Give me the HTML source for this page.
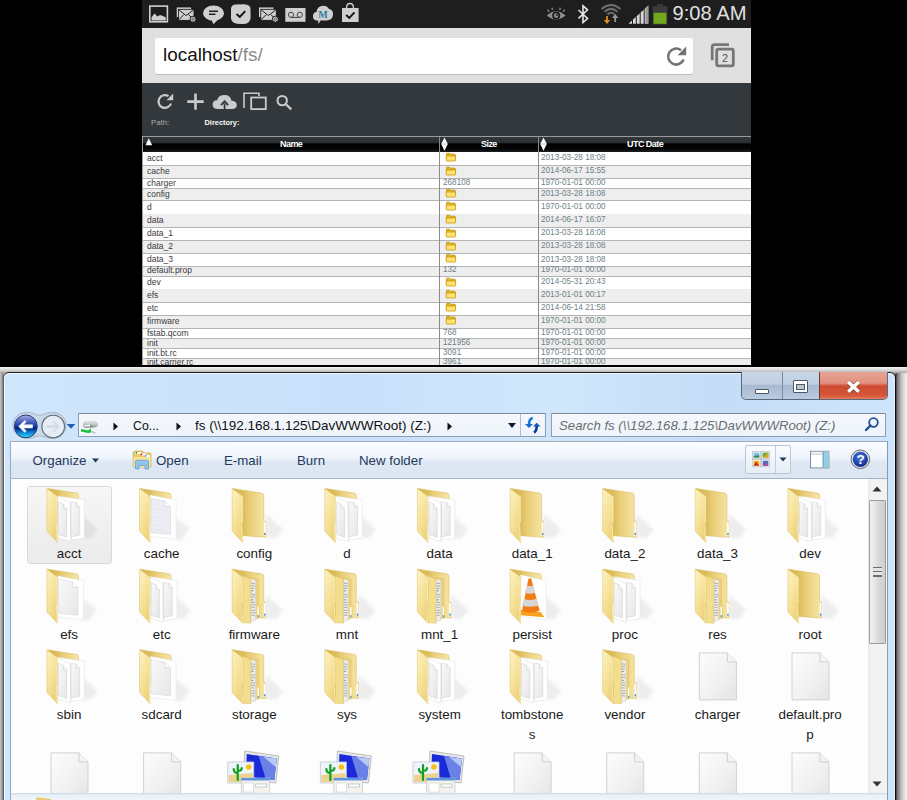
<!DOCTYPE html><html><head><meta charset="utf-8"><style>
*{margin:0;padding:0;box-sizing:border-box}
html,body{width:907px;height:800px;overflow:hidden;background:#000;font-family:"Liberation Sans", sans-serif}
.a{position:absolute}
.t{position:absolute;white-space:nowrap;line-height:1}
</style></head><body>

<div class="a" style="left:142px;top:0;width:609px;height:28px;background:#1e1e1e"></div>
<div class="a" style="left:142px;top:28px;width:609px;height:55px;background:#e0e0e0"></div>
<div class="a" style="left:155px;top:38px;width:538px;height:36px;background:#fff;border-radius:2px;box-shadow:0 1px 1px rgba(0,0,0,.18)"></div>
<div class="t" style="left:163px;top:46.3px;font-size:18.9px;color:#111">localhost<span style="color:#8a8a8a">/fs/</span></div>
<div class="a" style="left:142px;top:83px;width:609px;height:53px;background:#33383c"></div>
<div class="t" style="left:151px;top:119px;font-size:7.8px;color:#aaaaaa">Path:</div>
<div class="t" style="left:204.5px;top:119px;font-size:7.4px;font-weight:bold;color:#f8f8f8">Directory:</div>
<div class="a" style="left:142px;top:136px;width:609px;height:1px;background:#9a9a9a"></div>
<div class="a" style="left:143px;top:137px;width:608px;height:15px;background:linear-gradient(#33383c 0,#2a2e31 40%,#000 45%,#050505 80%,#1c1f22 100%)"></div>
<div class="a" style="left:142px;top:136px;width:1px;height:229px;background:#a0a0a0"></div>
<div class="a" style="left:439px;top:137px;width:1px;height:228px;background:#8a8a8a"></div>
<div class="a" style="left:538px;top:137px;width:1px;height:228px;background:#8a8a8a"></div>
<div class="a" style="left:143px;top:152px;width:608px;height:14px;background:#ffffff"></div>
<div class="a" style="left:143px;top:166px;width:608px;height:13px;background:#eeeeee"></div>
<div class="a" style="left:143px;top:179px;width:608px;height:10px;background:#ffffff"></div>
<div class="a" style="left:143px;top:189px;width:608px;height:12px;background:#eeeeee"></div>
<div class="a" style="left:143px;top:201px;width:608px;height:14px;background:#ffffff"></div>
<div class="a" style="left:143px;top:214px;width:608px;height:14px;background:#eeeeee"></div>
<div class="a" style="left:143px;top:228px;width:608px;height:13px;background:#ffffff"></div>
<div class="a" style="left:143px;top:241px;width:608px;height:13px;background:#eeeeee"></div>
<div class="a" style="left:143px;top:253px;width:608px;height:14px;background:#ffffff"></div>
<div class="a" style="left:143px;top:267px;width:608px;height:10px;background:#eeeeee"></div>
<div class="a" style="left:143px;top:277px;width:608px;height:13px;background:#ffffff"></div>
<div class="a" style="left:143px;top:289px;width:608px;height:14px;background:#eeeeee"></div>
<div class="a" style="left:143px;top:302px;width:608px;height:14px;background:#ffffff"></div>
<div class="a" style="left:143px;top:315px;width:608px;height:14px;background:#eeeeee"></div>
<div class="a" style="left:143px;top:328px;width:608px;height:11px;background:#ffffff"></div>
<div class="a" style="left:143px;top:339px;width:608px;height:10px;background:#eeeeee"></div>
<div class="a" style="left:143px;top:349px;width:608px;height:10px;background:#ffffff"></div>
<div class="a" style="left:143px;top:359px;width:608px;height:12px;background:#eeeeee"></div>
<div class="a" style="left:143px;top:165px;width:608px;height:1px;background:#b4b4b4"></div>
<div class="a" style="left:143px;top:178px;width:608px;height:1px;background:#b4b4b4"></div>
<div class="a" style="left:143px;top:188px;width:608px;height:1px;background:#b4b4b4"></div>
<div class="a" style="left:143px;top:200px;width:608px;height:1px;background:#b4b4b4"></div>
<div class="a" style="left:143px;top:227px;width:608px;height:1px;background:#b4b4b4"></div>
<div class="a" style="left:143px;top:240px;width:608px;height:1px;background:#b4b4b4"></div>
<div class="a" style="left:143px;top:253px;width:608px;height:1px;background:#b4b4b4"></div>
<div class="a" style="left:143px;top:266px;width:608px;height:1px;background:#b4b4b4"></div>
<div class="a" style="left:143px;top:276px;width:608px;height:1px;background:#b4b4b4"></div>
<div class="a" style="left:143px;top:302px;width:608px;height:1px;background:#b4b4b4"></div>
<div class="a" style="left:143px;top:315px;width:608px;height:1px;background:#b4b4b4"></div>
<div class="a" style="left:143px;top:328px;width:608px;height:1px;background:#b4b4b4"></div>
<div class="a" style="left:143px;top:338px;width:608px;height:1px;background:#b4b4b4"></div>
<div class="a" style="left:143px;top:348px;width:608px;height:1px;background:#b4b4b4"></div>
<div class="a" style="left:143px;top:358px;width:608px;height:1px;background:#b4b4b4"></div>
<div class="a" style="left:143px;top:370px;width:608px;height:1px;background:#b4b4b4"></div>
<div class="t" style="left:147px;top:153.70px;font-size:8.5px;color:#3a3a3a">acct</div>
<svg class="a" style="left:445px;top:152.2px" width="12" height="10" viewBox="0 0 12 10"><path d="M1.5 7.5 L1.5 2 Q1.5 1.2 2.3 1.2 L4.6 1.2 L5.6 2.2 L9.6 2.2 Q10.3 2.2 10.3 3 L10.3 7.5 Z" fill="#e8b820" stroke="#b88a10" stroke-width=".8"/><path d="M1.2 4 L10.6 4 L10.6 8.3 Q10.6 9 9.9 9 L1.9 9 Q1.2 9 1.2 8.3 Z" fill="#ffe270" stroke="#c49a10" stroke-width=".8"/></svg>
<div class="t" style="left:541px;top:153.90px;font-size:8.2px;color:#6f7f88">2013-03-28 18:08</div>
<div class="t" style="left:147px;top:167.20px;font-size:8.5px;color:#3a3a3a">cache</div>
<svg class="a" style="left:445px;top:165.7px" width="12" height="10" viewBox="0 0 12 10"><path d="M1.5 7.5 L1.5 2 Q1.5 1.2 2.3 1.2 L4.6 1.2 L5.6 2.2 L9.6 2.2 Q10.3 2.2 10.3 3 L10.3 7.5 Z" fill="#e8b820" stroke="#b88a10" stroke-width=".8"/><path d="M1.2 4 L10.6 4 L10.6 8.3 Q10.6 9 9.9 9 L1.9 9 Q1.2 9 1.2 8.3 Z" fill="#ffe270" stroke="#c49a10" stroke-width=".8"/></svg>
<div class="t" style="left:541px;top:167.40px;font-size:8.2px;color:#6f7f88">2014-06-17 15:55</div>
<div class="t" style="left:147px;top:178.50px;font-size:8.5px;color:#3a3a3a">charger</div>
<div class="t" style="left:443px;top:178.70px;font-size:8.2px;color:#6f7f88">268108</div>
<div class="t" style="left:541px;top:178.70px;font-size:8.2px;color:#6f7f88">1970-01-01 00:00</div>
<div class="t" style="left:147px;top:189.80px;font-size:8.5px;color:#3a3a3a">config</div>
<svg class="a" style="left:445px;top:188.2px" width="12" height="10" viewBox="0 0 12 10"><path d="M1.5 7.5 L1.5 2 Q1.5 1.2 2.3 1.2 L4.6 1.2 L5.6 2.2 L9.6 2.2 Q10.3 2.2 10.3 3 L10.3 7.5 Z" fill="#e8b820" stroke="#b88a10" stroke-width=".8"/><path d="M1.2 4 L10.6 4 L10.6 8.3 Q10.6 9 9.9 9 L1.9 9 Q1.2 9 1.2 8.3 Z" fill="#ffe270" stroke="#c49a10" stroke-width=".8"/></svg>
<div class="t" style="left:541px;top:190.00px;font-size:8.2px;color:#6f7f88">2013-03-28 18:08</div>
<div class="t" style="left:147px;top:202.80px;font-size:8.5px;color:#3a3a3a">d</div>
<svg class="a" style="left:445px;top:201.2px" width="12" height="10" viewBox="0 0 12 10"><path d="M1.5 7.5 L1.5 2 Q1.5 1.2 2.3 1.2 L4.6 1.2 L5.6 2.2 L9.6 2.2 Q10.3 2.2 10.3 3 L10.3 7.5 Z" fill="#e8b820" stroke="#b88a10" stroke-width=".8"/><path d="M1.2 4 L10.6 4 L10.6 8.3 Q10.6 9 9.9 9 L1.9 9 Q1.2 9 1.2 8.3 Z" fill="#ffe270" stroke="#c49a10" stroke-width=".8"/></svg>
<div class="t" style="left:541px;top:203.00px;font-size:8.2px;color:#6f7f88">1970-01-01 00:00</div>
<div class="t" style="left:147px;top:215.90px;font-size:8.5px;color:#3a3a3a">data</div>
<svg class="a" style="left:445px;top:214.2px" width="12" height="10" viewBox="0 0 12 10"><path d="M1.5 7.5 L1.5 2 Q1.5 1.2 2.3 1.2 L4.6 1.2 L5.6 2.2 L9.6 2.2 Q10.3 2.2 10.3 3 L10.3 7.5 Z" fill="#e8b820" stroke="#b88a10" stroke-width=".8"/><path d="M1.2 4 L10.6 4 L10.6 8.3 Q10.6 9 9.9 9 L1.9 9 Q1.2 9 1.2 8.3 Z" fill="#ffe270" stroke="#c49a10" stroke-width=".8"/></svg>
<div class="t" style="left:541px;top:216.10px;font-size:8.2px;color:#6f7f88">2014-06-17 16:07</div>
<div class="t" style="left:147px;top:229.00px;font-size:8.5px;color:#3a3a3a">data_1</div>
<svg class="a" style="left:445px;top:227.7px" width="12" height="10" viewBox="0 0 12 10"><path d="M1.5 7.5 L1.5 2 Q1.5 1.2 2.3 1.2 L4.6 1.2 L5.6 2.2 L9.6 2.2 Q10.3 2.2 10.3 3 L10.3 7.5 Z" fill="#e8b820" stroke="#b88a10" stroke-width=".8"/><path d="M1.2 4 L10.6 4 L10.6 8.3 Q10.6 9 9.9 9 L1.9 9 Q1.2 9 1.2 8.3 Z" fill="#ffe270" stroke="#c49a10" stroke-width=".8"/></svg>
<div class="t" style="left:541px;top:229.20px;font-size:8.2px;color:#6f7f88">2013-03-28 18:08</div>
<div class="t" style="left:147px;top:241.80px;font-size:8.5px;color:#3a3a3a">data_2</div>
<svg class="a" style="left:445px;top:240.7px" width="12" height="10" viewBox="0 0 12 10"><path d="M1.5 7.5 L1.5 2 Q1.5 1.2 2.3 1.2 L4.6 1.2 L5.6 2.2 L9.6 2.2 Q10.3 2.2 10.3 3 L10.3 7.5 Z" fill="#e8b820" stroke="#b88a10" stroke-width=".8"/><path d="M1.2 4 L10.6 4 L10.6 8.3 Q10.6 9 9.9 9 L1.9 9 Q1.2 9 1.2 8.3 Z" fill="#ffe270" stroke="#c49a10" stroke-width=".8"/></svg>
<div class="t" style="left:541px;top:242.00px;font-size:8.2px;color:#6f7f88">2013-03-28 18:08</div>
<div class="t" style="left:147px;top:255.30px;font-size:8.5px;color:#3a3a3a">data_3</div>
<svg class="a" style="left:445px;top:253.2px" width="12" height="10" viewBox="0 0 12 10"><path d="M1.5 7.5 L1.5 2 Q1.5 1.2 2.3 1.2 L4.6 1.2 L5.6 2.2 L9.6 2.2 Q10.3 2.2 10.3 3 L10.3 7.5 Z" fill="#e8b820" stroke="#b88a10" stroke-width=".8"/><path d="M1.2 4 L10.6 4 L10.6 8.3 Q10.6 9 9.9 9 L1.9 9 Q1.2 9 1.2 8.3 Z" fill="#ffe270" stroke="#c49a10" stroke-width=".8"/></svg>
<div class="t" style="left:541px;top:255.50px;font-size:8.2px;color:#6f7f88">2013-03-28 18:08</div>
<div class="t" style="left:147px;top:266.20px;font-size:8.5px;color:#3a3a3a">default.prop</div>
<div class="t" style="left:443px;top:266.40px;font-size:8.2px;color:#6f7f88">132</div>
<div class="t" style="left:541px;top:266.40px;font-size:8.2px;color:#6f7f88">1970-01-01 00:00</div>
<div class="t" style="left:147px;top:278.00px;font-size:8.5px;color:#3a3a3a">dev</div>
<svg class="a" style="left:445px;top:276.7px" width="12" height="10" viewBox="0 0 12 10"><path d="M1.5 7.5 L1.5 2 Q1.5 1.2 2.3 1.2 L4.6 1.2 L5.6 2.2 L9.6 2.2 Q10.3 2.2 10.3 3 L10.3 7.5 Z" fill="#e8b820" stroke="#b88a10" stroke-width=".8"/><path d="M1.2 4 L10.6 4 L10.6 8.3 Q10.6 9 9.9 9 L1.9 9 Q1.2 9 1.2 8.3 Z" fill="#ffe270" stroke="#c49a10" stroke-width=".8"/></svg>
<div class="t" style="left:541px;top:278.20px;font-size:8.2px;color:#6f7f88">2014-05-31 20:43</div>
<div class="t" style="left:147px;top:290.90px;font-size:8.5px;color:#3a3a3a">efs</div>
<svg class="a" style="left:445px;top:289.2px" width="12" height="10" viewBox="0 0 12 10"><path d="M1.5 7.5 L1.5 2 Q1.5 1.2 2.3 1.2 L4.6 1.2 L5.6 2.2 L9.6 2.2 Q10.3 2.2 10.3 3 L10.3 7.5 Z" fill="#e8b820" stroke="#b88a10" stroke-width=".8"/><path d="M1.2 4 L10.6 4 L10.6 8.3 Q10.6 9 9.9 9 L1.9 9 Q1.2 9 1.2 8.3 Z" fill="#ffe270" stroke="#c49a10" stroke-width=".8"/></svg>
<div class="t" style="left:541px;top:291.10px;font-size:8.2px;color:#6f7f88">2013-01-01 00:17</div>
<div class="t" style="left:147px;top:303.70px;font-size:8.5px;color:#3a3a3a">etc</div>
<svg class="a" style="left:445px;top:302.2px" width="12" height="10" viewBox="0 0 12 10"><path d="M1.5 7.5 L1.5 2 Q1.5 1.2 2.3 1.2 L4.6 1.2 L5.6 2.2 L9.6 2.2 Q10.3 2.2 10.3 3 L10.3 7.5 Z" fill="#e8b820" stroke="#b88a10" stroke-width=".8"/><path d="M1.2 4 L10.6 4 L10.6 8.3 Q10.6 9 9.9 9 L1.9 9 Q1.2 9 1.2 8.3 Z" fill="#ffe270" stroke="#c49a10" stroke-width=".8"/></svg>
<div class="t" style="left:541px;top:303.90px;font-size:8.2px;color:#6f7f88">2014-06-14 21:58</div>
<div class="t" style="left:147px;top:316.70px;font-size:8.5px;color:#3a3a3a">firmware</div>
<svg class="a" style="left:445px;top:315.2px" width="12" height="10" viewBox="0 0 12 10"><path d="M1.5 7.5 L1.5 2 Q1.5 1.2 2.3 1.2 L4.6 1.2 L5.6 2.2 L9.6 2.2 Q10.3 2.2 10.3 3 L10.3 7.5 Z" fill="#e8b820" stroke="#b88a10" stroke-width=".8"/><path d="M1.2 4 L10.6 4 L10.6 8.3 Q10.6 9 9.9 9 L1.9 9 Q1.2 9 1.2 8.3 Z" fill="#ffe270" stroke="#c49a10" stroke-width=".8"/></svg>
<div class="t" style="left:541px;top:316.90px;font-size:8.2px;color:#6f7f88">1970-01-01 00:00</div>
<div class="t" style="left:147px;top:329.25px;font-size:8.5px;color:#3a3a3a">fstab.qcom</div>
<div class="t" style="left:443px;top:329.45px;font-size:8.2px;color:#6f7f88">768</div>
<div class="t" style="left:541px;top:329.45px;font-size:8.2px;color:#6f7f88">1970-01-01 00:00</div>
<div class="t" style="left:147px;top:339.20px;font-size:8.5px;color:#3a3a3a">init</div>
<div class="t" style="left:443px;top:339.40px;font-size:8.2px;color:#6f7f88">121956</div>
<div class="t" style="left:541px;top:339.40px;font-size:8.2px;color:#6f7f88">1970-01-01 00:00</div>
<div class="t" style="left:147px;top:349.10px;font-size:8.5px;color:#3a3a3a">init.bt.rc</div>
<div class="t" style="left:443px;top:349.30px;font-size:8.2px;color:#6f7f88">3091</div>
<div class="t" style="left:541px;top:349.30px;font-size:8.2px;color:#6f7f88">1970-01-01 00:00</div>
<div class="t" style="left:147px;top:358.20px;font-size:8.5px;color:#3a3a3a">init.carrier.rc</div>
<div class="t" style="left:443px;top:358.40px;font-size:8.2px;color:#6f7f88">3961</div>
<div class="t" style="left:541px;top:358.40px;font-size:8.2px;color:#6f7f88">1970-01-01 00:00</div>
<div class="a" style="left:439px;top:152px;width:1px;height:213px;background:#8a8a8a"></div>
<div class="a" style="left:538px;top:152px;width:1px;height:213px;background:#8a8a8a"></div>
<div class="a" style="left:0;top:365px;width:907px;height:2px;background:#000"></div>
<div class="t" style="left:280px;top:140px;font-size:9px;font-weight:bold;color:#fff;letter-spacing:-0.55px">Name</div>
<div class="t" style="left:481px;top:140px;font-size:9px;font-weight:bold;color:#fff;letter-spacing:-0.55px">Size</div>
<div class="t" style="left:627px;top:140px;font-size:9px;font-weight:bold;color:#fff;letter-spacing:-0.55px">UTC Date</div>
<svg class="a" style="left:142px;top:0" width="609" height="28" viewBox="142 0 609 28">
<rect x="149.8" y="6.1" width="17.6" height="15.7" fill="none" stroke="#cfcfcf" stroke-width="1.6"/>
<path d="M151.5 20.5 L151.5 17.2 L154.5 13.6 L157.5 16.5 L160 15 L163 16 L165.8 17.5 L165.8 20.5 Z" fill="#cfcfcf"/>
<rect x="176.2" y="7" width="15.5" height="10.5" fill="#cfcfcf" stroke="#111" stroke-width=".8"/>
<rect x="178.5" y="9.3" width="15.5" height="11" fill="#cfcfcf" stroke="#111" stroke-width=".8"/>
<path d="M179 10 L186 15.5 L193.5 10 M179 19.5 L184 14.5 M193.5 19.5 L188.5 14.5" stroke="#222" stroke-width="1" fill="none"/>
<circle cx="193" cy="19.2" r="3" fill="#cfcfcf" stroke="#111" stroke-width=".9"/><circle cx="193" cy="19.2" r="1.2" fill="none" stroke="#333" stroke-width=".7"/>
<ellipse cx="213.5" cy="13.2" rx="10.5" ry="7.6" fill="#cfcfcf"/>
<path d="M211 19 L213.5 24.3 L218 19.5 Z" fill="#cfcfcf"/>
<path d="M209 11.2 L218 11.2 M209 14.2 L215.5 14.2" stroke="#222" stroke-width="1.5"/>
<path d="M236 4.5 Q231 4.5 231 9 L231 16 Q230.5 20 233.5 22.5 Q237 24.5 244 24 Q250 23.5 250.6 18 L250.5 10 Q251 4.5 244 4.3 Z" fill="#cfcfcf"/>
<path d="M236.5 14 L239.8 17 L245.2 11.2" stroke="#111" stroke-width="1.9" fill="none"/>
<rect x="258.5" y="7" width="15.5" height="10.5" fill="#cfcfcf" stroke="#111" stroke-width=".8"/>
<rect x="260.8" y="9.3" width="15.5" height="11" fill="#cfcfcf" stroke="#111" stroke-width=".8"/>
<path d="M261.3 10 L268.3 15.5 L275.8 10 M261.3 19.5 L266.3 14.5 M275.8 19.5 L270.8 14.5" stroke="#222" stroke-width="1" fill="none"/>
<circle cx="275.3" cy="19.2" r="3" fill="#cfcfcf" stroke="#111" stroke-width=".9"/><circle cx="275.3" cy="19.2" r="1.2" fill="none" stroke="#333" stroke-width=".7"/>
<rect x="285.3" y="8" width="20.2" height="13.8" fill="#cfcfcf"/>
<circle cx="291" cy="14.8" r="2.6" fill="none" stroke="#444" stroke-width="1"/><circle cx="299.8" cy="14.8" r="2.6" fill="none" stroke="#444" stroke-width="1"/><path d="M291 17.4 L299.8 17.4" stroke="#444" stroke-width="1"/>
<path d="M316 20.5 Q312.5 19.5 313 15.5 Q313.5 12 316.5 12 Q317 7 321.5 6 Q326.5 5 329 9 Q333 9.5 333 14 Q333.5 19.5 327 20.5 L320.5 20.5 L318.5 24 L318 20.5 Z" fill="#cfcfcf"/>
<text x="323" y="18.2" font-family="Liberation Serif" font-weight="bold" font-size="10" fill="#2a7fa0" text-anchor="middle">M</text>
<path d="M346.5 8 Q346.5 3.5 350 3.5 Q353.5 3.5 353.5 8" fill="none" stroke="#cfcfcf" stroke-width="1.3"/>
<rect x="342" y="8" width="16.6" height="14" fill="#cfcfcf"/>
<path d="M346.2 15 L349.3 18 L354.5 12.3" stroke="#111" stroke-width="1.9" fill="none"/>
<path d="M546.8 15.6 Q556 6.8 565.6 15.6 Q556 23.6 546.8 15.6 Z" fill="#8e8e8e"/>
<circle cx="556.2" cy="15.6" r="4" fill="#1e1e1e"/><circle cx="556.2" cy="15.6" r="2.3" fill="#8e8e8e"/><circle cx="557" cy="15" r="1" fill="#1e1e1e"/>
<path d="M549.2 11.6 L547.4 9.6 M552.6 9.8 L551.8 7.8 M559.6 9.8 L560.4 7.8 M563 11.6 L564.8 9.6" stroke="#8e8e8e" stroke-width="1.4"/>
<path d="M578.5 10 L587.5 18.5 L583 22.5 L583 5.8 L587.5 9.8 L578.5 18.3" fill="none" stroke="#e6e6e6" stroke-width="1.6"/>
<path d="M601.5 9 Q611 1 620.5 9" fill="none" stroke="#6e6e6e" stroke-width="2"/>
<path d="M604.5 11.8 Q611 6 617.5 11.8" fill="none" stroke="#6e6e6e" stroke-width="2"/>
<path d="M607.5 14.5 Q611 11 614.5 14.5" fill="none" stroke="#6e6e6e" stroke-width="2"/>
<path d="M607 16 L607 21" stroke="#e08a20" stroke-width="1.8"/><path d="M603.8 20 L610.2 20 L607 24 Z" fill="#e08a20"/>
<path d="M615.2 17.5 L615.2 22" stroke="#9a9a9a" stroke-width="1.8"/><path d="M612 18 L618.4 18 L615.2 14 Z" fill="#9a9a9a"/>
<path d="M628.5 23.8 L648.3 5.5 L648.3 23.8 Z" fill="#d8d8d8"/>
<path d="M632.5 20 L632.5 24 M636.3 16.5 L636.3 24 M640.2 13 L640.2 24 M644.2 9 L644.2 24" stroke="#1e1e1e" stroke-width="1"/>
<path d="M645.5 8 L648.3 5.5 L648.3 23.8 L645.5 23.8 Z" fill="#9a9a9a"/>
<rect x="657" y="4.3" width="6.2" height="2" fill="#3c3c3c"/>
<rect x="652.7" y="6.2" width="14.6" height="18.4" fill="#3c3c3c"/>
<rect x="653.6" y="12.8" width="12.8" height="11" fill="#72a81e"/>
</svg>
<div class="t" style="left:672.5px;top:3.2px;font-size:20.2px;color:#e0e0e0">9:08 AM</div>
<svg class="a" style="left:660px;top:40px" width="90" height="32" viewBox="660 40 90 32">
<path d="M683.6 59.5 A8 8 0 1 1 681 50.2" fill="none" stroke="#737373" stroke-width="2.6"/>
<path d="M686.2 46.5 L686.2 55.2 L677.6 55.2 Z" fill="#737373"/>
<path d="M712.2 60.3 L712.2 47 Q712.2 44.6 714.6 44.6 L729 44.6" fill="none" stroke="#767676" stroke-width="2.8"/>
<rect x="716.7" y="49.2" width="16.6" height="16.6" rx="1.6" fill="none" stroke="#767676" stroke-width="2.8"/>
<text x="725" y="62" font-family="Liberation Sans" font-size="11" fill="#555" text-anchor="middle">2</text>
</svg>
<svg class="a" style="left:150px;top:88px" width="150" height="26" viewBox="150 88 150 26">
<path d="M171 103.5 A6.4 6.4 0 1 1 168.5 96.2" fill="none" stroke="#c9cbcc" stroke-width="2.2"/>
<path d="M173.2 93.4 L173.2 100.2 L166.6 100.2 Z" fill="#c9cbcc"/>
<path d="M195.5 93.5 L195.5 109.8 M187.3 101.6 L203.7 101.6" stroke="#c9cbcc" stroke-width="2.6"/>
<path d="M218 109 Q212.6 109 212.6 104.5 Q212.6 100.5 217 100.3 Q218.5 95 224.5 95 Q230.5 95 231.5 100.8 Q236.8 101 236.8 105 Q236.8 109 232 109 Z" fill="#c9cbcc"/>
<path d="M224.6 109 L224.6 103.5 M221 105.2 L224.6 101.4 L228.2 105.2" stroke="#33383c" stroke-width="1.8" fill="none"/>
<path d="M245 107 L244 107 L244 93.2 L259 93.2 L259 96" fill="none" stroke="#c9cbcc" stroke-width="1.6"/>
<rect x="251.2" y="97.5" width="14.6" height="11.6" fill="none" stroke="#c9cbcc" stroke-width="1.8"/>
<circle cx="282.2" cy="100.6" r="4.7" fill="none" stroke="#c9cbcc" stroke-width="2"/>
<path d="M285.6 104 L291.3 109.4" stroke="#c9cbcc" stroke-width="2.4"/>
</svg>
<svg class="a" style="left:143px;top:137px" width="608" height="15" viewBox="143 137 608 15">
<path d="M145.5 145.2 L148.8 138.2 L152.2 145.2 Z" fill="#fff"/>
<path d="M441.2 144 L444.5 137.6 L447.8 144 L444.5 150.8 Z" fill="#fff"/><path d="M441.5 144 L447.5 144" stroke="#999" stroke-width=".6"/>
<path d="M540.2 144 L543.5 137.6 L546.8 144 L543.5 150.8 Z" fill="#fff"/><path d="M540.5 144 L546.5 144" stroke="#999" stroke-width=".6"/>
</svg>
<div class="a" style="left:0;top:367px;width:907px;height:433px;background:linear-gradient(90deg,#cacaca 0,#8c8c8c 2.5px,#6a6a6a 3px,#c8c8c8 4px,#c8c8c8 894px,#3a3a3a 896px,#7a7a7a 897.5px,#cacaca 902px,#f4f4f4 907px)"></div>
<div class="a" style="left:0;top:367px;width:907px;height:6px;background:linear-gradient(#f4f4f4,#d4d4d4 55%,#a6a6a6)"></div>
<div class="a" style="left:3px;top:372px;width:893px;height:440px;border:1px solid #26303a;border-top-color:#1c1c1c;border-left-color:#5a5e62;border-right-color:#0c0c0c;border-radius:6px 6px 0 0;background:linear-gradient(90deg,#d0e6fc 0,#cde3fa 15%,#c8e1fb 40%,#d0e6fb 62%,#c4ddf7 80%,#cfe5fc 100%);box-shadow:inset 1px 1px 0 #f2f8ff,inset -1px 0 0 #e8f2fc"></div>
<div class="a" style="left:741px;top:372px;width:147px;height:28px;border:1px solid #5a6878;border-top:none;border-radius:0 0 5px 5px;overflow:hidden;background:linear-gradient(#c9d7e7 0,#bfcfe2 45%,#a8bad0 50%,#b8cbe0 100%)"><div class="a" style="left:40px;top:0;width:1px;height:28px;background:#7a8898"></div><div class="a" style="left:78px;top:0;width:68px;height:28px;background:linear-gradient(#e8a394 0,#e2907e 40%,#cf4a2e 50%,#d5573a 85%,#e98a70 100%)"></div><div class="a" style="left:77px;top:0;width:1px;height:28px;background:#6b3a30"></div></div>
<div class="a" style="left:755px;top:389px;width:14px;height:5px;background:#fff;border:1px solid #4a5868;border-radius:1px"></div>
<div class="a" style="left:793px;top:380px;width:15px;height:13px;border:1px solid #4a5868;background:#fff;border-radius:1px"><div style="position:absolute;left:2px;top:3px;width:9px;height:6px;background:#b9c6d4;border:1px solid #4a5868"></div></div>
<svg class="a" style="left:840px;top:377px" width="26" height="18" viewBox="0 0 26 18"><path d="M8.2 5 L18.8 14.8 M18.8 5 L8.2 14.8" stroke="#4a3a38" stroke-width="5" stroke-linecap="butt" opacity=".55"/><path d="M8.2 5 L18.8 14.8 M18.8 5 L8.2 14.8" stroke="#fdfdfd" stroke-width="3.5" stroke-linecap="butt"/></svg>
<svg class="a" style="left:10px;top:409px" width="62" height="32" viewBox="10 409 62 32"><path d="M25.9 412.4 Q33 412.4 36 414.6 Q39.5 416.2 43 414.6 Q46.5 412.4 53.2 412.4 A13 13 0 0 1 53.2 438.4 Q46.5 438.4 43 436.6 Q39.5 435 36 436.6 Q33 438.4 25.9 438.4 A13 13 0 0 1 25.9 412.4 Z" fill="#c9d8e8" stroke="#a3b0bf" stroke-width="1" opacity=".9"/></svg>
<svg class="a" style="left:13px;top:413.8px" width="26" height="26" viewBox="0 0 26 26"><defs><linearGradient id="bk" x1="0" y1="0" x2="0" y2="1"><stop offset="0" stop-color="#a8b4e0"/><stop offset=".3" stop-color="#4a62c0"/><stop offset=".5" stop-color="#1a3aa8"/><stop offset=".56" stop-color="#001a78"/><stop offset=".75" stop-color="#0a78d0"/><stop offset="1" stop-color="#38e0fc"/></linearGradient></defs><circle cx="12.85" cy="12.4" r="11.4" fill="url(#bk)" stroke="#2a3a78" stroke-width="1"/><path d="M5.6 12.4 L11.8 6.4 L13.2 7.8 L10.6 10.8 L19.6 10.8 L19.6 14 L10.6 14 L13.2 17 L11.8 18.4 Z" fill="#fff" stroke="#e8e8e8" stroke-width=".6" stroke-linejoin="round"/></svg>
<svg class="a" style="left:40px;top:413.8px" width="26" height="26" viewBox="0 0 26 26"><circle cx="13.2" cy="12.5" r="11.3" fill="#e6edf5" stroke="#5f6a76" stroke-width="1.1"/><path d="M20.2 12.5 L14.2 6.6 L12.8 8 L15.4 11 L6.5 11 L6.5 14 L15.4 14 L12.8 17 L14.2 18.4 Z" fill="#d4dee9"/></svg>
<svg class="a" style="left:66px;top:422px" width="10" height="8" viewBox="0 0 10 8"><path d="M0.7 2 L9.3 2 L5 6.8 Z" fill="#1f5bb8"/></svg>
<div class="a" style="left:78px;top:413px;width:468px;height:24px;background:linear-gradient(#f4f8fd,#eef4fb);border:1px solid #8e9db0;border-top-color:#7d8898;border-radius:1px"></div>
<div class="a" style="left:520px;top:414px;width:1px;height:22px;background:#b0bccb"></div>
<svg class="a" style="left:76px;top:414px" width="28" height="24" viewBox="76 414 28 24"><defs><linearGradient id="drv" x1="0" y1="0" x2="0" y2="1"><stop offset="0" stop-color="#e6e6e6"/><stop offset=".5" stop-color="#c8c8c8"/><stop offset="1" stop-color="#8a8a8a"/></linearGradient></defs><path d="M83 424 Q83 421.5 86 421 L91.5 420.4 Q97.8 421 97.8 423.5 L97.8 425.6 Q97 427.6 92 427.8 L86 428 Q83 427.6 83 426 Z" fill="url(#drv)"/><path d="M84.5 425.2 L90 424.8 L90 426.2 L84.5 426.6 Z" fill="#f4f4fc"/><rect x="90.2" y="425" width="1.6" height="2" fill="#3ab83a"/><path d="M81 429 L88 430.6 L91 428.6 L91 432.4 L88 433 L81 431.5 Z" fill="#12c832"/><path d="M91 431.5 L95.5 433.2" stroke="#b8c0c8" stroke-width="1.4"/></svg>
<svg class="a" style="left:113px;top:422px" width="6" height="9" viewBox="0 0 6 9"><path d="M0.5 0.5 L5 4.5 L0.5 8.5 Z" fill="#111"/></svg>
<svg class="a" style="left:176px;top:422px" width="6" height="9" viewBox="0 0 6 9"><path d="M0.5 0.5 L5 4.5 L0.5 8.5 Z" fill="#111"/></svg>
<svg class="a" style="left:447px;top:422px" width="6" height="9" viewBox="0 0 6 9"><path d="M0.5 0.5 L5 4.5 L0.5 8.5 Z" fill="#111"/></svg>
<div class="t" style="left:133px;top:419.5px;font-size:12.3px;color:#111">Co...</div>
<div class="t" style="left:195px;top:419px;font-size:13.5px;color:#111">fs (\\192.168.1.125\DavWWWRoot) (Z:)</div>
<svg class="a" style="left:507px;top:422px" width="10" height="7" viewBox="0 0 10 7"><path d="M1 1 L9 1 L5 6 Z" fill="#10163a"/></svg>
<svg class="a" style="left:523px;top:416px" width="20" height="18" viewBox="0 0 20 18"><path d="M9.8 2 Q6.2 2.6 6 8.2" fill="none" stroke="#1a78d0" stroke-width="2.6"/><path d="M2 8 L10 8 L6 12 Z" fill="#1a6cc8"/><path d="M10 10.5 L17.5 10.5 L13.7 6.8 Z" fill="#1a5cbc"/><path d="M13.7 10 Q13.7 15 11 16.5" fill="none" stroke="#0c3a9a" stroke-width="2.6"/></svg>
<div class="a" style="left:551px;top:413px;width:335px;height:24px;background:linear-gradient(#f4f8fd,#eef4fb);border:1px solid #8e9db0;border-top-color:#7d8898;border-radius:1px"></div>
<div class="t" style="left:559px;top:419px;font-size:13.2px;font-style:italic;color:#6d6d6d">Search fs (\\192.168.1.125\DavWWWRoot) (Z:)</div>
<svg class="a" style="left:864px;top:416px" width="16" height="16" viewBox="0 0 16 16"><circle cx="9.5" cy="6.5" r="4.3" fill="none" stroke="#1f4e9a" stroke-width="1.8"/><path d="M6.5 9.5 L2 14" stroke="#1f4e9a" stroke-width="2.4" stroke-linecap="round"/></svg>
<div class="a" style="left:11px;top:441px;width:876px;height:38px;background:linear-gradient(#fafcff 0,#f0f6fd 40%,#e6eef9 50%,#dee8f5 56%,#dce6f3 100%);border-top:1px solid #9eabbb;border-bottom:1px solid #a4b6cf"></div>
<div class="t" style="left:32.5px;top:454px;color:#1e395b;font-size:13.3px">Organize</div>
<svg class="a" style="left:92px;top:458px" width="7" height="5" viewBox="0 0 7 5"><path d="M0 0.5 L7 0.5 L3.5 4.5 Z" fill="#1e395b"/></svg>
<svg class="a" style="left:128px;top:446px" width="28" height="28" viewBox="128 446 28 28"><path d="M133.2 452.5 L134.5 451 L142.5 451 L143.5 452.5 L145 453 L150.5 453 L151 454 L151 467 L133.2 467 Z" fill="#e8c868" stroke="#c8a040" stroke-width=".6"/><rect x="135" y="452" width="6" height="2.2" fill="#fff"/><circle cx="136.4" cy="452.9" r=".9" fill="#10a010"/><rect x="141" y="453.4" width="5" height="2.2" fill="#fff"/><circle cx="141.4" cy="454.4" r=".9" fill="#e01010"/><rect x="145" y="455" width="5" height="2" fill="#fff"/><circle cx="145.6" cy="455.8" r=".9" fill="#2a90f0"/><path d="M133.6 457 L150.6 457 L150.6 467 L133.6 467 Z" fill="#f8e49a"/><path d="M135.5 469 L135.5 461.5 Q135.5 460.2 137 460.2 L147 460.2 Q148.5 460.2 148.5 461.5 L148.5 469 L145 469 L145 465.5 L139 465.5 L139 469 Z" fill="#90c4ec" stroke="#5a9ad0" stroke-width=".7"/></svg>
<div class="t" style="left:156px;top:454px;color:#1e395b;font-size:13.3px">Open</div>
<div class="t" style="left:224px;top:454px;color:#1e395b;font-size:13.3px">E-mail</div>
<div class="t" style="left:297px;top:454px;color:#1e395b;font-size:13.3px">Burn</div>
<div class="t" style="left:359px;top:454px;color:#1e395b;font-size:13.3px">New folder</div>
<div class="a" style="left:745px;top:445px;width:46px;height:29px;border:1px solid #b9c6d6;border-radius:2px;background:linear-gradient(#fbfcfe,#e6edf6)"></div>
<div class="a" style="left:775px;top:446px;width:1px;height:27px;background:#c4cfdc"></div>
<svg class="a" style="left:751px;top:450px" width="20" height="18" viewBox="0 0 20 18"><rect x="1.5" y="1.5" width="8" height="7.2" fill="#fff" stroke="#b8bcc4" stroke-width=".7"/><rect x="10.5" y="1.5" width="8" height="7.2" fill="#fff" stroke="#b8bcc4" stroke-width=".7"/><rect x="1.5" y="9.6" width="8" height="7.2" fill="#fff" stroke="#b8bcc4" stroke-width=".7"/><rect x="10.5" y="9.6" width="8" height="7.2" fill="#fff" stroke="#b8bcc4" stroke-width=".7"/><rect x="2.6" y="2.6" width="5.8" height="5" fill="#7ac0e8"/><path d="M2.6 6 L8.4 5.2 L8.4 7.6 L2.6 7.6Z" fill="#3a8a3a"/><rect x="11.6" y="2.6" width="5.8" height="5" fill="#58b038"/><path d="M11.6 7.6 L17.4 2.6 L17.4 7.6Z" fill="#e8a020"/><rect x="2.6" y="10.7" width="5.8" height="5" fill="#f0b020"/><path d="M2.6 15.7 L5 11.5 L8.4 15.7Z" fill="#d02818"/><rect x="11.6" y="10.7" width="5.8" height="5" fill="#4a70c8"/><path d="M11.6 15.7 L14 12 L17.4 15.7Z" fill="#c04080"/></svg>
<svg class="a" style="left:779px;top:457px" width="8" height="5" viewBox="0 0 8 5"><path d="M0.5 0.5 L7.5 0.5 L4 4.5 Z" fill="#1e395b"/></svg>
<svg class="a" style="left:809px;top:450px" width="21" height="19" viewBox="0 0 21 19"><rect x="1.5" y="1.3" width="18.4" height="16.6" fill="#fff" stroke="#7e8e9e" stroke-width="1"/><rect x="2" y="1.8" width="17.4" height="2.4" fill="#eef2f6"/><path d="M2 4.3 L19.4 4.3" stroke="#aab4be" stroke-width=".6"/><rect x="14" y="1.8" width="5.4" height="15.6" fill="#8fd0e4"/><rect x="13.6" y="1.8" width=".9" height="15.6" fill="#5a90a8"/></svg>
<svg class="a" style="left:850px;top:449px" width="21" height="21" viewBox="0 0 21 21"><defs><radialGradient id="hg" cx=".45" cy=".35" r=".75"><stop offset="0" stop-color="#4a7ae0"/><stop offset=".7" stop-color="#1a3aa0"/><stop offset="1" stop-color="#0c2278"/></radialGradient></defs><circle cx="10.4" cy="10.3" r="9.3" fill="#dfe3ea" stroke="#6a6e78" stroke-width="1"/><circle cx="10.4" cy="10.3" r="7.6" fill="url(#hg)"/><text x="10.6" y="15.2" font-family="Liberation Sans" font-weight="bold" font-size="13.5" text-anchor="middle" fill="#fff">?</text></svg>
<div class="a" style="left:11px;top:479px;width:857px;height:314px;background:#fdfdfd"></div>
<div class="a" style="left:868px;top:479px;width:19px;height:314px;background:linear-gradient(90deg,#e9e9e9,#f2f2f2 3px,#f2f2f2)"></div>
<div class="a" style="left:869px;top:500px;width:17px;height:144px;border:1px solid #9c9c9c;border-radius:1px;background:linear-gradient(90deg,#f2f2f2,#e2e2e2 40%,#d6d6d6 60%,#cfcfcf)"></div>
<div class="a" style="left:873px;top:566.5px;width:9px;height:10px;background:repeating-linear-gradient(#6e6e6e 0,#6e6e6e 1.3px,#e4e4e4 1.3px,#e4e4e4 4.1px)"></div>
<svg class="a" style="left:872px;top:486px" width="10" height="6" viewBox="0 0 10 6"><path d="M0.5 5.5 L5 0.5 L9.5 5.5 Z" fill="#333"/></svg>
<svg class="a" style="left:872px;top:781px" width="10" height="6" viewBox="0 0 10 6"><path d="M0.5 0.5 L5 5.5 L9.5 0.5 Z" fill="#333"/></svg>
<div class="a" style="left:887px;top:441px;width:1px;height:359px;background:#8d9aab"></div>
<div class="a" style="left:10px;top:441px;width:1px;height:359px;background:#9aabbc"></div>
<div class="a" style="left:11px;top:793px;width:876px;height:7px;background:linear-gradient(#c9d6e6,#e9f0f8 2px,#f1f5fb)"></div>
<svg width="0" height="0" style="position:absolute"><defs>
<linearGradient id="gflap" x1="0" y1="0" x2=".6" y2="1"><stop offset="0" stop-color="#fcf3c4"/><stop offset=".55" stop-color="#f6e39c"/><stop offset="1" stop-color="#eed37c"/></linearGradient>
<linearGradient id="gback" x1="0" y1="0" x2="1" y2="0"><stop offset="0" stop-color="#d8b450"/><stop offset=".32" stop-color="#dcbd5c"/><stop offset=".5" stop-color="#e8cd76"/><stop offset="1" stop-color="#f6e6a8"/></linearGradient>
<linearGradient id="gdoc" x1="0" y1="0" x2="1" y2="1"><stop offset="0" stop-color="#fafafa"/><stop offset="1" stop-color="#e6e6e6"/></linearGradient>
<linearGradient id="gfile" x1="0" y1="0" x2="1" y2="1"><stop offset="0" stop-color="#fdfdfd"/><stop offset=".6" stop-color="#f0f0f0"/><stop offset="1" stop-color="#e4e4e4"/></linearGradient>
<filter id="blur" x="-50%" y="-50%" width="200%" height="200%"><feGaussianBlur stdDeviation="1.8"/></filter>
<g id="fback">
 <path d="M33.6 25 L51 41 L44 50 L33.6 49 Z" fill="#000" opacity=".06" filter="url(#blur)"/>
 <path d="M0.5 0 L29.5 4.6 Q31.6 5 31.6 7.2 L31.6 32 L33.6 33 L33.6 48.8 L10.5 47.2 Z" fill="url(#gback)" stroke="#d6b552" stroke-width=".5"/>
</g>
<g id="ftab"><rect x="31.8" y="34" width="1.7" height="13" fill="#fff"/><rect x="32" y="44.5" width="1.4" height="2" fill="#3a8ae0"/></g>
<g id="fflap"><path d="M0 0 L10.6 7.8 L10.6 34.5 L9.8 35.5 L10.6 54 L0 42.8 Z" fill="url(#gflap)" stroke="#e0c060" stroke-width=".5"/><path d="M10.2 8.2 L10.2 34.3 M9.6 35.8 L10.2 53" stroke="#fff6cc" stroke-width=".8" opacity=".8"/></g>
<g id="ic-empty"><use href="#fback"/><use href="#ftab"/><use href="#fflap"/></g>
<g id="pp">
 <path d="M0 0 L13 3 L13 45 L0 42 Z" fill="#fff" stroke="#e2e2e2" stroke-width=".5"/>
 <path d="M1.5 4 L7.5 5.4 L11.5 9.5 L11.5 41 L1.5 39 Z" fill="url(#gdoc)" stroke="#d4d4d4" stroke-width=".5"/>
 <path d="M7.5 5.4 L7.5 9 L11.5 9.5" fill="#fff" stroke="#c8c8c8" stroke-width=".5"/>
</g>
<g id="ic-papers"><path d="M33.6 25 L51 41 L44 50 L33.6 49 Z" fill="#000" opacity=".06" filter="url(#blur)"/>
 <path d="M0.5 0 L29.5 4.6 Q31.6 5 31.6 7.2 L31.6 20 L10.5 20 Z" fill="url(#gback)" stroke="#d6b552" stroke-width=".5"/>
 <path d="M10.6 7.4 L37.4 11.4 L37.4 49.8 L23.4 51.6 L10.6 47.5 Z" fill="#fff" stroke="#dedede" stroke-width=".5"/>
 <path d="M23.6 13.2 L29.5 14.2 L32.8 18.4 L32.8 46.5 L23.6 48.5 Z" fill="url(#gdoc)" stroke="#d0d0d0" stroke-width=".5"/>
 <path d="M29.5 14.2 L29.5 18.4 L32.8 18.4" fill="#fafafa" stroke="#c4c4c4" stroke-width=".5"/>
 <path d="M23.4 14 L24.6 14.4 L24.6 50.5 L23.4 51.5 Z" fill="#d8d8d8" opacity=".7"/>
 <path d="M10.6 8 L23.4 14.2 L23.4 53.2 L10.6 48.8 Z" fill="#fff" stroke="#dadada" stroke-width=".5"/>
 <path d="M11.6 13.4 L16.4 15.6 L19.8 20.2 L19.8 48.8 L11.6 46 Z" fill="url(#gdoc)" stroke="#cdcdcd" stroke-width=".5"/>
 <path d="M16.4 15.6 L16.4 20 L19.8 20.2" fill="#fafafa" stroke="#c4c4c4" stroke-width=".5"/>
 <use href="#fflap"/></g>
<g id="ic-paper1"><path d="M34 28 L50 40 L42 52 L34 50 Z" fill="#000" opacity=".06" filter="url(#blur)"/>
 <path d="M0.5 0 L29.5 4.6 Q31.6 5 31.6 7.2 L31.6 20 L10.5 20 Z" fill="url(#gback)" stroke="#d6b552" stroke-width=".5"/>
 <path d="M10.6 6.5 L36.5 11.5 L36.5 50.5 L10.6 48 Z" fill="#fff" stroke="#e0e0e0" stroke-width=".5"/>
 <path d="M11.5 10 L25.5 12.5 L31 18 L31 46 L11.5 44 Z" fill="url(#gdoc)" stroke="#d0d0d0" stroke-width=".5"/>
 <path d="M25.5 12.5 L25.5 18 L31 18" fill="#fff" stroke="#c4c4c4" stroke-width=".5"/>
 <use href="#fflap"/></g>
<g id="ic-lined"><path d="M34 28 L50 40 L42 52 L34 50 Z" fill="#000" opacity=".06" filter="url(#blur)"/>
 <path d="M0.5 0 L29.5 4.6 Q31.6 5 31.6 7.2 L31.6 20 L10.5 20 Z" fill="url(#gback)" stroke="#d6b552" stroke-width=".5"/>
 <path d="M10.6 6.5 L36.5 11.5 L36.5 50.5 L10.6 48 Z" fill="#fff" stroke="#e0e0e0" stroke-width=".5"/>
 <path d="M11.5 10 L25.5 12.5 L31 18 L31 46 L11.5 44 Z" fill="#eceef4" stroke="#d0d0d8" stroke-width=".5"/>
 <path d="M12 16 L30 19 M12 20 L30 23 M12 24 L30 27 M12 28 L30 31 M12 32 L30 35 M12 36 L30 39 M12 40 L30 43" stroke="#dfe2ea" stroke-width=".5"/>
 <path d="M25.5 12.5 L25.5 18 L31 18" fill="#fff" stroke="#c4c4c4" stroke-width=".5"/>
 <use href="#fflap"/></g>
<g id="ic-docs"><use href="#fback"/><use href="#ftab"/>
 <path d="M17 8.5 L26 10 L26 36.5 L27 37.2 L27 49 L17 51 Z" fill="#eed47c" stroke="#d8b850" stroke-width=".5"/>
 <rect x="25.3" y="37.6" width="1.5" height="10.6" fill="#fff"/><rect x="25.4" y="46" width="1.3" height="2" fill="#3a8ae0"/>
 <path d="M18.6 9.6 L23.4 11 L23.4 51.2 L18.6 52.2 Z" fill="#ededed" stroke="#c8c8c8" stroke-width=".4"/>
 <path d="M19.2 14 L22.8 14.6 M19.2 16.5 L22.6 17 M19.2 19 L22.2 19.4 M19.2 25 L22.8 25.4 M19.2 27.5 L22.8 27.9 M19.2 33 L22.6 33.3 M19.2 35.5 L22.8 35.8 M19.2 38 L22.2 38.3 M19.2 41 L22.8 41.2 M19.2 43.5 L22.8 43.7 M19.2 46 L22.4 46.2" stroke="#9ea2a6" stroke-width=".9"/>
 <path d="M19.6 21.5 L21 21.7 M19.6 30.5 L21 30.7" stroke="#3a7ad0" stroke-width="1.1"/>
 <path d="M10.6 6.4 L18.8 10 L18.8 35.5 L18 36.5 L18.8 54 L10.6 53.4 Z" fill="#f3de90" stroke="#dcbc58" stroke-width=".5"/>
 <use href="#fflap"/></g>
<g id="ic-vlc"><path d="M33.6 25 L51 41 L44 50 L33.6 49 Z" fill="#000" opacity=".06" filter="url(#blur)"/>
 <path d="M0.5 0 L29.5 4.6 Q31.6 5 31.6 7.2 L31.6 20 L10.5 20 Z" fill="url(#gback)" stroke="#d6b552" stroke-width=".5"/>
 <path d="M10.6 5.5 L36 11.5 L36 50.5 L10.6 47 Z" fill="#fff" stroke="#e0e0e0" stroke-width=".5"/>
 <path d="M10.6 40.5 L31 43 L34.2 48 L10.6 46 Z" fill="#f7a21a"/>
 <path d="M18.4 9.6 Q19.8 8.6 21.2 9.4 L29.6 41.5 Q20 45.5 12 41.5 Z" fill="#f27c12"/>
 <path d="M16.8 16.4 Q19.6 17.6 23.2 16.4 L25 23.6 Q19.6 25.6 14.8 23.6 Z" fill="#d6d6d6"/>
 <path d="M13.8 29.6 Q19.8 32 26.4 29.6 L28.2 36.2 Q19.8 39 11.8 36.2 Z" fill="#d6d6d6"/>
 <use href="#fflap"/></g>
<g id="ic-file"><path d="M0.5 0.5 L28.5 0.5 L37.5 9.5 L37.5 47.5 L0.5 47.5 Z" fill="url(#gfile)" stroke="#d2d2d2" stroke-width="1"/><path d="M28.5 0.5 L28.5 9.5 L37.5 9.5" fill="#f4f4f4" stroke="#cfcfcf" stroke-width="1"/></g>
<g id="ic-web">
 <path d="M17 0 L51 5 L48 32 L16 28 Z" fill="#e8e8e8" stroke="#b0b0b0" stroke-width=".8"/>
 <path d="M19 3 L49 7.5 L46.5 29 L18 25.5 Z" fill="#1a2ad8"/>
 <path d="M31 5 L49 7.5 L46.5 29 L38 28 Z" fill="#6a82e8"/>
 <path d="M36 6 L49 7.5 L48 16 Z" fill="#b8c8f4"/>
 <path d="M0 11 L26 11 L26 32 L0 32 Z" fill="#eef4fa" stroke="#c0c8d0" stroke-width=".8"/>
 <path d="M1 24 L25 22 L25 31 L1 31 Z" fill="#ecd490"/>
 <circle cx="21" cy="16" r="2.8" fill="#f4c020"/>
 <path d="M10 29 L10 14 M10 22 Q6 22 6 18 M10 20 Q14 20 14 17" stroke="#10a020" stroke-width="2.2" fill="none" stroke-linecap="round"/>
 <rect x="13.5" y="27" width="28.5" height="16" fill="#f4f2ea" stroke="#bcc4cc" stroke-width=".6"/>
 <rect x="13.5" y="27" width="28.5" height="2.5" fill="#5a94e0"/>
 <rect x="16" y="32" width="10" height="9" fill="#fff" stroke="#c8c8c8" stroke-width=".5"/>
 <rect x="28" y="33" width="11" height="3" fill="#fff" stroke="#8aa" stroke-width=".5"/>
</g>
</defs></svg>
<div class="a" style="left:27px;top:486px;width:85px;height:78px;border:1px solid #d9d9d9;border-radius:3px;background:linear-gradient(#f6f6f6,#ebebeb)"></div>
<svg class="a" style="left:0;top:0;overflow:visible" width="907" height="800" viewBox="0 0 907 800"><use href="#ic-papers" transform="translate(46.90,488.50)"/><use href="#ic-lined" transform="translate(139.53,488.50)"/><use href="#ic-empty" transform="translate(232.15,488.50)"/><use href="#ic-papers" transform="translate(324.78,488.50)"/><use href="#ic-papers" transform="translate(417.40,488.50)"/><use href="#ic-empty" transform="translate(510.03,488.50)"/><use href="#ic-empty" transform="translate(602.65,488.50)"/><use href="#ic-empty" transform="translate(695.27,488.50)"/><use href="#ic-papers" transform="translate(787.90,488.50)"/><use href="#ic-paper1" transform="translate(46.90,569.20)"/><use href="#ic-papers" transform="translate(139.53,569.20)"/><use href="#ic-docs" transform="translate(232.15,569.20)"/><use href="#ic-docs" transform="translate(324.78,569.20)"/><use href="#ic-docs" transform="translate(417.40,569.20)"/><use href="#ic-vlc" transform="translate(510.03,569.20)"/><use href="#ic-papers" transform="translate(602.65,569.20)"/><use href="#ic-docs" transform="translate(695.27,569.20)"/><use href="#ic-empty" transform="translate(787.90,569.20)"/><use href="#ic-papers" transform="translate(46.90,649.80)"/><use href="#ic-paper1" transform="translate(139.53,649.80)"/><use href="#ic-docs" transform="translate(232.15,649.80)"/><use href="#ic-docs" transform="translate(324.78,649.80)"/><use href="#ic-papers" transform="translate(417.40,649.80)"/><use href="#ic-papers" transform="translate(510.03,649.80)"/><use href="#ic-docs" transform="translate(602.65,649.80)"/><use href="#ic-file" transform="translate(698.88,652.40)"/><use href="#ic-file" transform="translate(791.50,652.40)"/><use href="#ic-file" transform="translate(50.50,752.40)"/><use href="#ic-file" transform="translate(143.12,752.40)"/><use href="#ic-web" transform="translate(227.75,751.00)"/><use href="#ic-web" transform="translate(320.38,751.00)"/><use href="#ic-web" transform="translate(413.00,751.00)"/><use href="#ic-file" transform="translate(513.62,752.40)"/><use href="#ic-file" transform="translate(606.25,752.40)"/><use href="#ic-file" transform="translate(698.88,752.40)"/><use href="#ic-file" transform="translate(791.50,752.40)"/></svg>
<div class="t" style="left:19.1px;width:100px;text-align:center;top:546.9px;font-size:13.4px;color:#1a1a1a">acct</div>
<div class="t" style="left:111.7px;width:100px;text-align:center;top:546.9px;font-size:13.4px;color:#1a1a1a">cache</div>
<div class="t" style="left:204.3px;width:100px;text-align:center;top:546.9px;font-size:13.4px;color:#1a1a1a">config</div>
<div class="t" style="left:297.0px;width:100px;text-align:center;top:546.9px;font-size:13.4px;color:#1a1a1a">d</div>
<div class="t" style="left:389.6px;width:100px;text-align:center;top:546.9px;font-size:13.4px;color:#1a1a1a">data</div>
<div class="t" style="left:482.2px;width:100px;text-align:center;top:546.9px;font-size:13.4px;color:#1a1a1a">data_1</div>
<div class="t" style="left:574.9px;width:100px;text-align:center;top:546.9px;font-size:13.4px;color:#1a1a1a">data_2</div>
<div class="t" style="left:667.5px;width:100px;text-align:center;top:546.9px;font-size:13.4px;color:#1a1a1a">data_3</div>
<div class="t" style="left:760.1px;width:100px;text-align:center;top:546.9px;font-size:13.4px;color:#1a1a1a">dev</div>
<div class="t" style="left:19.1px;width:100px;text-align:center;top:627.6px;font-size:13.4px;color:#1a1a1a">efs</div>
<div class="t" style="left:111.7px;width:100px;text-align:center;top:627.6px;font-size:13.4px;color:#1a1a1a">etc</div>
<div class="t" style="left:204.3px;width:100px;text-align:center;top:627.6px;font-size:13.4px;color:#1a1a1a">firmware</div>
<div class="t" style="left:297.0px;width:100px;text-align:center;top:627.6px;font-size:13.4px;color:#1a1a1a">mnt</div>
<div class="t" style="left:389.6px;width:100px;text-align:center;top:627.6px;font-size:13.4px;color:#1a1a1a">mnt_1</div>
<div class="t" style="left:482.2px;width:100px;text-align:center;top:627.6px;font-size:13.4px;color:#1a1a1a">persist</div>
<div class="t" style="left:574.9px;width:100px;text-align:center;top:627.6px;font-size:13.4px;color:#1a1a1a">proc</div>
<div class="t" style="left:667.5px;width:100px;text-align:center;top:627.6px;font-size:13.4px;color:#1a1a1a">res</div>
<div class="t" style="left:760.1px;width:100px;text-align:center;top:627.6px;font-size:13.4px;color:#1a1a1a">root</div>
<div class="t" style="left:19.1px;width:100px;text-align:center;top:708.2px;font-size:13.4px;color:#1a1a1a">sbin</div>
<div class="t" style="left:111.7px;width:100px;text-align:center;top:708.2px;font-size:13.4px;color:#1a1a1a">sdcard</div>
<div class="t" style="left:204.3px;width:100px;text-align:center;top:708.2px;font-size:13.4px;color:#1a1a1a">storage</div>
<div class="t" style="left:297.0px;width:100px;text-align:center;top:708.2px;font-size:13.4px;color:#1a1a1a">sys</div>
<div class="t" style="left:389.6px;width:100px;text-align:center;top:708.2px;font-size:13.4px;color:#1a1a1a">system</div>
<div class="t" style="left:482.2px;width:100px;text-align:center;top:708.2px;font-size:13.4px;color:#1a1a1a">tombstone</div>
<div class="t" style="left:482.2px;width:100px;text-align:center;top:727.7px;font-size:13.4px;color:#1a1a1a">s</div>
<div class="t" style="left:574.9px;width:100px;text-align:center;top:708.2px;font-size:13.4px;color:#1a1a1a">vendor</div>
<div class="t" style="left:667.5px;width:100px;text-align:center;top:708.2px;font-size:13.4px;color:#1a1a1a">charger</div>
<div class="t" style="left:760.1px;width:100px;text-align:center;top:708.2px;font-size:13.4px;color:#1a1a1a">default.pro</div>
<div class="t" style="left:760.1px;width:100px;text-align:center;top:727.7px;font-size:13.4px;color:#1a1a1a">p</div>
<div class="a" style="left:11px;top:793px;width:876px;height:7px;background:linear-gradient(#c9d6e6,#e9f0f8 2px,#f1f5fb)"></div>
<svg class="a" style="left:34px;top:796px" width="22" height="4" viewBox="0 0 22 4"><path d="M2 1.2 L17 3 L17 4 L2 4 Z" fill="#e8cc70"/></svg>
</body></html>
